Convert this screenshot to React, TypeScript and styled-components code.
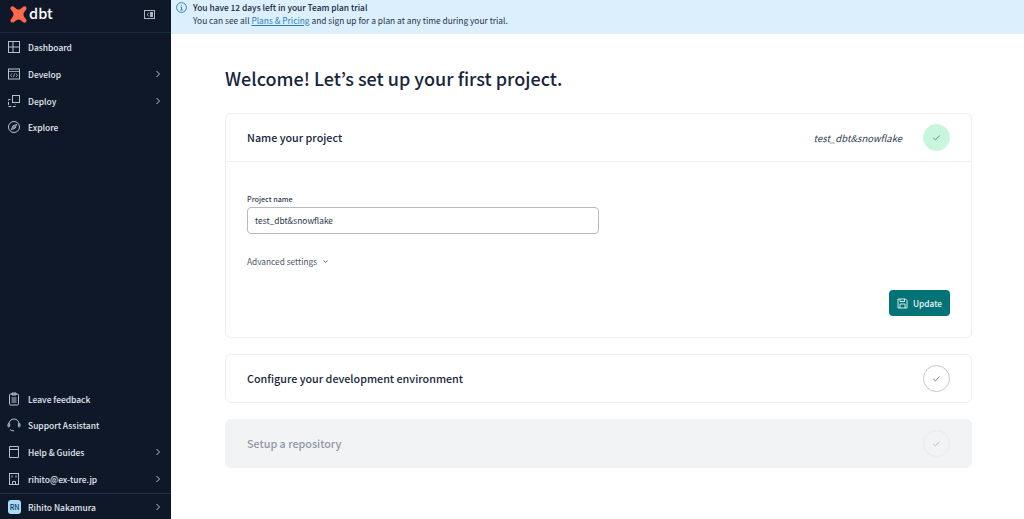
import React from "react";
import styled, { createGlobalStyle } from "styled-components";

const Global = createGlobalStyle`
  html, body { margin: 0; padding: 0; height: 100%; background: #fff; overflow: hidden; }
  #root { height: 100%; }
  * { box-sizing: border-box; }
  body { font-family: "Noto Sans CJK JP", "Noto Sans", sans-serif; }
`;

const Page = styled.div`display: flex; width: 1024px; height: 519px;`;
const Sidebar = styled.aside`
  width: 171px; flex: none; background: #0f1829; color: #e8ecf2; display: flex; flex-direction: column;
`;
const Brand = styled.div`
  height: 33px; flex: none; display: flex; align-items: center; justify-content: space-between;
  padding: 0 16px 4px 10px; border-bottom: 1px solid #1f2c3e;
`;
const Logo = styled.div`display: flex; align-items: center; gap: 2px;`;
const LogoWord = styled.span`font-size: 14.5px; font-weight: 500; color: #fff; line-height: 16px; position: relative; top: -1px;`;
const NavGroup = styled.nav`display: flex; flex-direction: column; padding-top: 1px;`;
const BottomGroup = styled.nav`margin-top: auto; display: flex; flex-direction: column;`;
const NavRow = styled.div`
  height: 26.7px; flex: none; display: flex; align-items: center; padding: 0 9px 0 7px; font-size: 8.45px; font-weight: 500; color: #e3e8f2;
`;
const NavIcon = styled.span`width: 14px; height: 14px; flex: none; margin-right: 7px; display: flex; align-items: center; justify-content: center; color: #b9c1cc;`;
const NavLabel = styled.span`flex: 1; line-height: 14px;`;
const UserRow = styled(NavRow)`border-top: 1px solid #243043; height: 26px; margin-top: 1px;`;
const Avatar = styled.span`
  width: 13px; height: 14px; margin: 0 7px 0 1px; flex: none; border-radius: 3px; background: #a9dcf8; color: #0e3350;
  font-size: 7px; font-weight: 500; display: flex; align-items: center; justify-content: center;
`;

const Main = styled.main`flex: 1; min-width: 0; display: flex; flex-direction: column;`;
const Banner = styled.div`
  height: 34px; flex: none; background: #dbeffd; display: flex; padding: 1px 5px; gap: 6px; color: #17263c; font-size: 8.4px; line-height: 13px;
`;
const BannerIcon = styled.span`color: #1f78ad; display: flex; margin-top: 1px; flex: none;`;
const BannerText = styled.div`display: flex; flex-direction: column; padding-top: 0;`;
const BannerTitle = styled.div`font-weight: 500; line-height: 13px;`;
const BannerBody = styled.div`line-height: 13px; color: #26344a;`;
const BannerLink = styled.span`color: #2a7fb0; text-decoration: underline;`;

const Content = styled.div`padding: 31px 52px 0 54px; display: flex; flex-direction: column;`;
const Title = styled.h1`margin: 0 0 21px; font-size: 18px; line-height: 27px; font-weight: 500; color: #17263c;`;

const Card = styled.section<{ $disabled?: boolean }>`
  border: 1px solid ${p => (p.$disabled ? "#f2f3f5" : "#eceef1")}; border-radius: 6px; background: ${p => (p.$disabled ? "#f2f3f5" : "#fff")};
  margin-bottom: 16px;
`;
const CardHead = styled.div`
  height: 47px; display: flex; align-items: center; padding: 0 21px; gap: 21px;
`;
const CardTitle = styled.h2<{ $disabled?: boolean }>`
  margin: 0; flex: 1; font-size: 10.75px; font-weight: 500; line-height: 16px; color: ${p => (p.$disabled ? "#8f98a6" : "#17263c")};
`;
const CardValue = styled.span`font-size: 9.5px; font-style: italic; color: #333f52;`;
const Status = styled.span<{ $tone: "done" | "open" | "off" }>`
  width: 27px; height: 27px; border-radius: 50%; flex: none; display: flex; align-items: center; justify-content: center;
  background: ${p => (p.$tone === "done" ? "#c8f6dd" : "transparent")};
  border: 1px solid ${p => (p.$tone === "open" ? "#c3c7d0" : p.$tone === "off" ? "#e9ebee" : "#c8f6dd")};
  color: ${p => (p.$tone === "done" ? "#3a8a78" : p.$tone === "open" ? "#5c6675" : "#aab0ba")};
`;
const CardBody = styled.div`
  border-top: 1px solid #eceef1; height: 176px; padding: 32px 21px 0; display: flex; flex-direction: column;
`;
const FieldLabel = styled.label`font-size: 7.2px; line-height: 10px; font-weight: 500; color: #333f52; margin-bottom: 3px;`;
const TextField = styled.div`
  width: 352px; height: 27px; border: 1px solid #b3bac4; border-radius: 4px; padding: 0 7px 1px; display: flex; align-items: center;
  font-size: 8.4px; color: #2a3649;
`;
const Advanced = styled.div`margin-top: 20px; display: flex; align-items: center; gap: 5px; font-size: 8.3px; line-height: 14px; color: #4a5566;`;
const Actions = styled.div`margin-top: 22px; display: flex; justify-content: flex-end;`;
const UpdateButton = styled.button`
  width: 61px; height: 26px; border: 0; border-radius: 4px; background: #047377; color: #e8f6f5; display: flex; align-items: center; justify-content: center; gap: 5px;
  font: 500 8.3px "Noto Sans CJK JP", sans-serif; padding: 0;
`;

const Sv = styled.svg`display: block; flex: none;`;
const Chevron = () => (
  <Sv width="8" height="8" viewBox="0 0 8 8" fill="none" stroke="#b9c1cc" strokeWidth="1"><path d="M2.5 1l3 3-3 3" /></Sv>
);
const Check = ({ size = 9 }: { size?: number }) => (
  <Sv width={size} height={size} viewBox="0 0 10 10" fill="none" stroke="currentColor" strokeWidth="1"><path d="M1.5 5.5l2.3 2L8.5 3" /></Sv>
);
const Ic = ({ children }: { children: React.ReactNode }) => (
  <NavIcon><Sv width="14" height="14" viewBox="0 0 14 14" fill="none" stroke="currentColor" strokeWidth="1">{children}</Sv></NavIcon>
);

const items = [
  { label: "Dashboard", icon: <><rect x="1.5" y="1.5" width="11" height="11" /><path d="M1.5 7h11M6 1.5v11" /></> },
  { label: "Develop", more: true, icon: <><rect x="1.5" y="2" width="11" height="10" /><path d="M1.5 4.5h11M5 6.5L3.5 8.3 5 10M9 6.5l1.5 1.8L9 10M7.6 6.5l-1.2 3.6" strokeWidth=".8" /></> },
  { label: "Deploy", more: true, icon: <><rect x="5.5" y="1.5" width="7" height="7" /><path d="M3.5 5.5h-2v7h7v-2" strokeDasharray="3 1.4" /></> },
  { label: "Explore", icon: <><circle cx="7" cy="7" r="5.5" /><path d="M9.6 4.4L8.1 8.1 4.4 9.6 5.9 5.9z" /><circle cx="7" cy="7" r=".5" /></> },
];
const bottom = [
  { label: "Leave feedback", icon: <><rect x="2.5" y="2" width="9" height="11" rx="1.2" /><path d="M5 1h4v2H5zM4.5 6h5M4.5 8h5M4.5 10h5" /></> },
  { label: "Support Assistant", icon: <><path d="M2 8V6a5 5 0 0 1 10 0v2" /><rect x="1" y="5.5" width="1.6" height="3.5" rx=".8" /><rect x="11.4" y="5.5" width="1.6" height="3.5" rx=".8" /><path d="M3 11.5c1 1 2.5 1.3 4 1.3" /></> },
  { label: "Help & Guides", more: true, icon: <><path d="M2.5 1.5h9v11h-9zM2.5 4.5h9" /></> },
  { label: "rihito@ex-ture.jp", more: true, icon: <><rect x="2.5" y="1.5" width="9" height="11" /><path d="M5 3.5v2M9 3.5v2M5.5 12.5V9.5h3v3" /></> },
];

export default function App() {
  return (
    <Page>
      <Global />
      <Sidebar>
        <Brand>
          <Logo>
            <Sv width="17" height="17" viewBox="0 0 17 17"><path fill="#ff694a" d="M1.2.7c1-.7 2.1-.4 2.9.2l2.6 2.1c1 .8 2.6.8 3.6 0l2.6-2.1c.8-.6 1.9-.9 2.9-.2.9.7 1 1.9.4 2.8l-2.1 2.8c-.8 1.3-.8 3 0 4.4l2.1 2.8c.6.9.5 2.1-.4 2.8-1 .7-2.1.4-2.9-.2l-2.6-2.1c-1-.8-2.6-.8-3.6 0L4.1 16c-.8.6-1.9.9-2.9.2-.9-.7-1-1.9-.4-2.8l2.1-2.8c.8-1.4.8-3.1 0-4.4L.8 3.5C.2 2.6.3 1.4 1.2.7z" /></Sv>
            <LogoWord>dbt</LogoWord>
          </Logo>
          <Sv width="11" height="9" viewBox="0 0 11 9" fill="none" stroke="#aeb6c2" strokeWidth="1"><rect x=".5" y=".5" width="10" height="8" /><rect x="6" y="2" width="3" height="5" fill="#aeb6c2" stroke="none" /><path d="M4.8 2.8L3 4.5l1.8 1.7" /></Sv>
        </Brand>
        <NavGroup>
          {items.map(i => (
            <NavRow key={i.label}><Ic>{i.icon}</Ic><NavLabel>{i.label}</NavLabel>{i.more && <Chevron />}</NavRow>
          ))}
        </NavGroup>
        <BottomGroup>
          {bottom.map(i => (
            <NavRow key={i.label}><Ic>{i.icon}</Ic><NavLabel>{i.label}</NavLabel>{i.more && <Chevron />}</NavRow>
          ))}
          <UserRow><Avatar>RN</Avatar><NavLabel>Rihito Nakamura</NavLabel><Chevron /></UserRow>
        </BottomGroup>
      </Sidebar>
      <Main>
        <Banner>
          <BannerIcon>
            <Sv width="11" height="11" viewBox="0 0 11 11" fill="none" stroke="currentColor" strokeWidth=".9"><circle cx="5.5" cy="5.5" r="4.9" /><path d="M4.5 5h1.1v3M4.4 8h2.4M5.5 2.8v1" /></Sv>
          </BannerIcon>
          <BannerText>
            <BannerTitle>You have 12 days left in your Team plan trial</BannerTitle>
            <BannerBody>You can see all <BannerLink>Plans &amp; Pricing</BannerLink> and sign up for a plan at any time during your trial.</BannerBody>
          </BannerText>
        </Banner>
        <Content>
          <Title>Welcome! Let’s set up your first project.</Title>
          <Card>
            <CardHead>
              <CardTitle>Name your project</CardTitle>
              <CardValue>test_dbt&amp;snowflake</CardValue>
              <Status $tone="done"><Check /></Status>
            </CardHead>
            <CardBody>
              <FieldLabel>Project name</FieldLabel>
              <TextField>test_dbt&amp;snowflake</TextField>
              <Advanced>
                Advanced settings
                <Sv width="7" height="7" viewBox="0 0 7 7" fill="none" stroke="#4a5566" strokeWidth=".9"><path d="M1.5 2.5l2 2 2-2" /></Sv>
              </Advanced>
              <Actions>
                <UpdateButton>
                  <Sv width="11" height="11" viewBox="0 0 11 11" fill="none" stroke="currentColor" strokeWidth=".9"><path d="M1 1h7.5L10 2.5V10H1z" /><path d="M3 1v2.5h4.5V1M3 10V6h5v4" /></Sv>
                  Update
                </UpdateButton>
              </Actions>
            </CardBody>
          </Card>
          <Card>
            <CardHead>
              <CardTitle>Configure your development environment</CardTitle>
              <Status $tone="open"><Check /></Status>
            </CardHead>
          </Card>
          <Card $disabled>
            <CardHead>
              <CardTitle $disabled>Setup a repository</CardTitle>
              <Status $tone="off"><Check /></Status>
            </CardHead>
          </Card>
        </Content>
      </Main>
    </Page>
  );
}
